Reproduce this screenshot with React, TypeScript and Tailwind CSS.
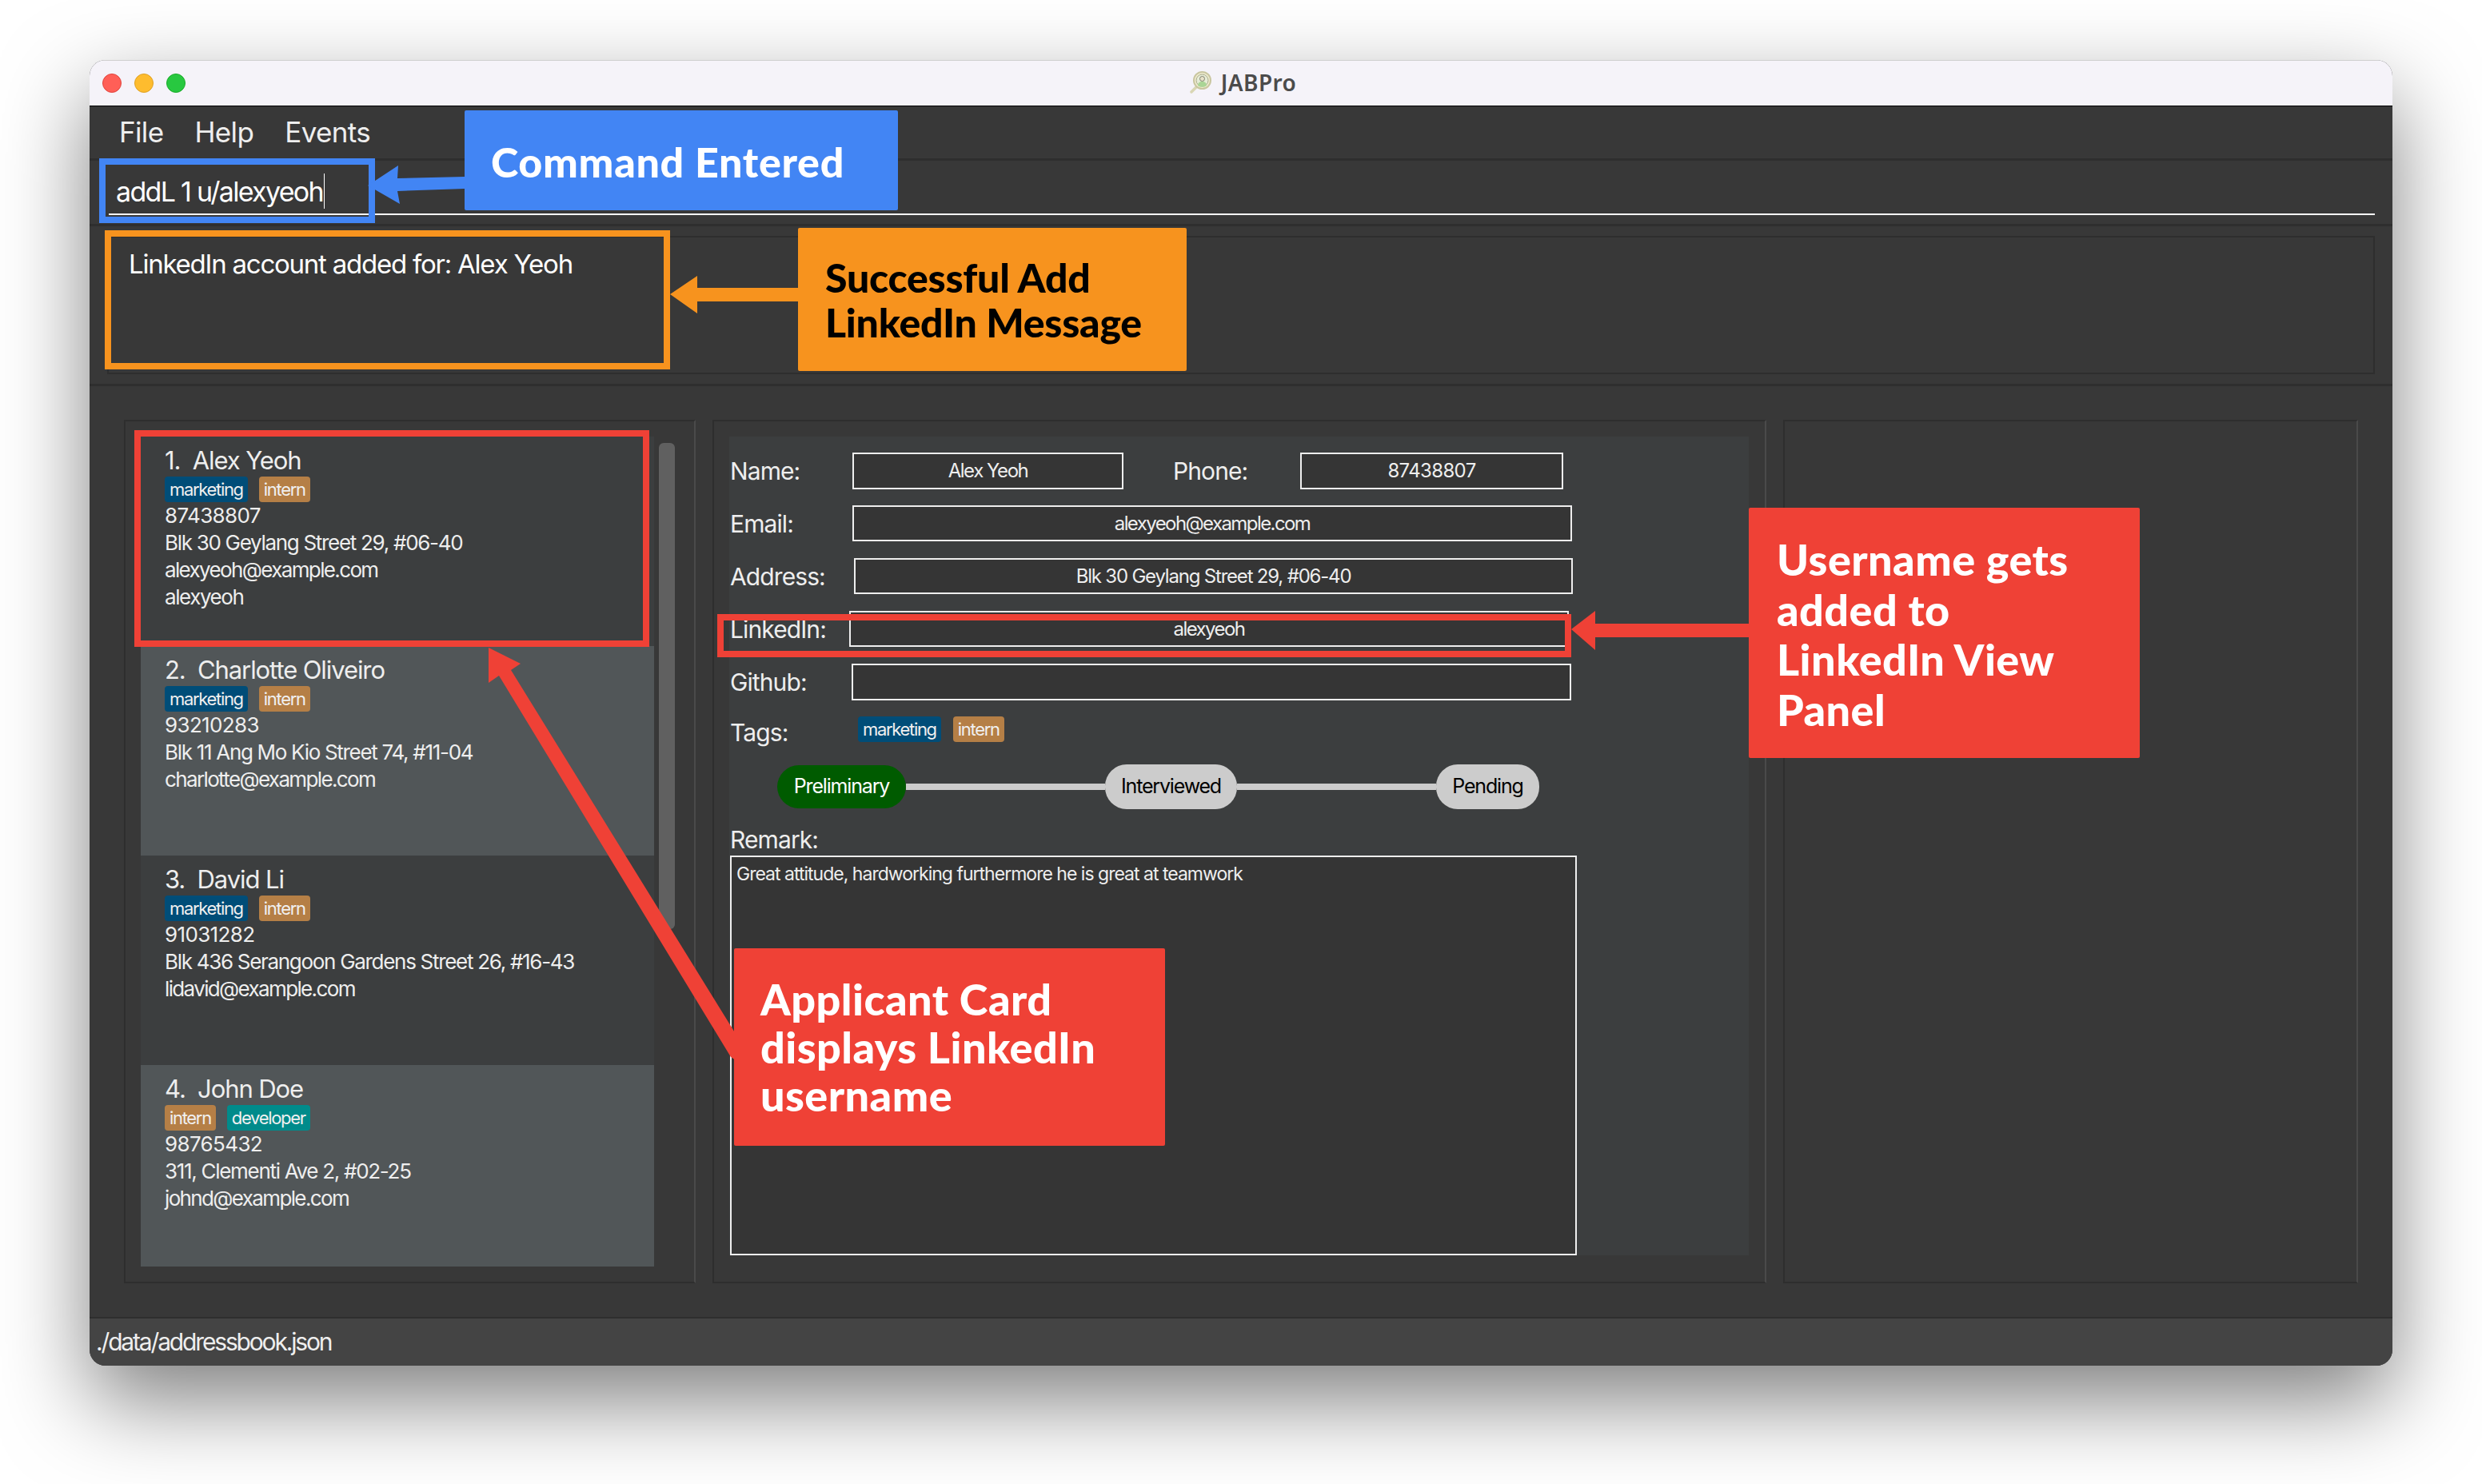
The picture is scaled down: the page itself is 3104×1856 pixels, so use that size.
import React from "react";

const Tag = ({ label, color }: { label: string; color: string }) => (
  <span className={`inline-flex h-[32px] items-center rounded-[4px] px-[6px] text-[22px] leading-none tracking-[-0.06em] text-[#f0f0f0] ${color}`}>{label}</span>
);
const MARKETING = "bg-[#004d78]";
const INTERN = "bg-[#b57f46]";
const DEV = "bg-[#008b8b]";

type CardData = { n: string; name: string; tags: [string, string][]; phone: string; address: string; email: string; username?: string; light?: boolean };
const cards: CardData[] = [
  { n: "1.", name: "Alex Yeoh", phone: "87438807", tags: [["marketing", MARKETING], ["intern", INTERN]], address: "Blk 30 Geylang Street 29, #06-40", email: "alexyeoh@example.com", username: "alexyeoh" },
  { n: "2.", name: "Charlotte Oliveiro", phone: "93210283", light: true, tags: [["marketing", MARKETING], ["intern", INTERN]], address: "Blk 11 Ang Mo Kio Street 74, #11-04", email: "charlotte@example.com" },
  { n: "3.", name: "David Li", phone: "91031282", tags: [["marketing", MARKETING], ["intern", INTERN]], address: "Blk 436 Serangoon Gardens Street 26, #16-43", email: "lidavid@example.com" },
  { n: "4.", name: "John Doe", phone: "98765432", light: true, tags: [["intern", INTERN], ["developer", DEV]], address: "311, Clementi Ave 2, #02-25", email: "johnd@example.com" },
];

const Card = ({ c }: { c: CardData }) => (
  <div className={`h-[262px] shrink-0 pl-[30px] pt-[11px] text-[26px] leading-[34px] text-[#eeeeee] ${c.light ? "bg-[#515658]" : "bg-[#3c3e3f]"}`}>
    <div className="whitespace-pre text-[31px] leading-[38px] tracking-[-0.035em]">{c.n}  {c.name}</div>
    <div className="mt-[1px] flex gap-[14px]">
      {c.tags.map(([l, col]) => <Tag key={l} label={l} color={col} />)}
    </div>
    <div>{c.phone}</div>
    <div className="tracking-[-0.05em]">{c.address}</div>
    <div className="tracking-[-0.063em]">{c.email}</div>
    {c.username && <div className="tracking-[-0.055em]">{c.username}</div>}
  </div>
);

const Label = ({ children, className }: { children: React.ReactNode; className: string }) => (
  <div className={`shrink-0 text-[30px] leading-[36px] tracking-[-0.03em] text-[#eeeeee] ${className}`}>{children}</div>
);
const Box = ({ children, className }: { children?: React.ReactNode; className: string }) => (
  <div className={`flex shrink-0 items-center justify-center border-2 border-[#eeeeee] bg-[#353535] text-[24px] text-[#eeeeee] ${className}`}>{children}</div>
);
const Node = ({ children, className }: { children: React.ReactNode; className: string }) => (
  <div className={`flex shrink-0 items-center justify-center rounded-[27px] text-[25px] tracking-[-0.047em] ${className}`}>{children}</div>
);

const Callout = ({ children, className }: { children: React.ReactNode; className: string }) => (
  <div className={`absolute rounded-[2px] font-black [font-family:Lato,sans-serif] ${className}`}>{children}</div>
);

export default function App() {
  return (
    <div className="relative h-[1856px] w-[3104px] overflow-hidden bg-white pl-[112px] pt-[75px] tracking-[-0.64px] [font-family:Inter,sans-serif]">
      <div className="flex h-[1633px] w-[2880px] flex-col overflow-hidden rounded-[20px] bg-[#383838] shadow-[0_44px_110px_rgba(0,0,0,0.5)]">
        {/* title bar */}
        <div className="grid h-[58px] shrink-0 grid-cols-[1fr_auto_1fr] items-center border-b border-t border-b-black border-t-[#cfcfcf] bg-[#f5f3f9] pl-[16px]">
          <div className="flex gap-[16px]">
            <span className="h-[24px] w-[24px] rounded-full border border-[#e0443e] bg-[#ff5f57]" />
            <span className="h-[24px] w-[24px] rounded-full border border-[#dea123] bg-[#febc2e]" />
            <span className="h-[24px] w-[24px] rounded-full border border-[#1aab29] bg-[#28c840]" />
          </div>
          <div className="mb-[3px] flex items-center gap-[12px] pr-[12px]">
            <svg viewBox="0 0 28 28" className="h-[28px] w-[28px]">
              <line x1="3" y1="26" x2="10" y2="19" stroke="#d9d6b4" strokeWidth="3.5" strokeLinecap="round" />
              <circle cx="16.5" cy="11.5" r="10.5" fill="#f0edd0" stroke="#c9c6a0" strokeWidth="2" />
              <circle cx="16.5" cy="11.5" r="7.5" fill="#e6ecd6" stroke="#a9a98c" strokeWidth="1" />
              <path d="M11 18c0-3.5 2.2-5 5.5-5s5.5 1.5 5.5 5c-1.500 1.300-3.400 1.800-5.500 1.800S12.500 19.300 11 18z" fill="#aad596" />
              <circle cx="16.500" cy="9.500" r="3" fill="#e8e2c8" stroke="#7f8070" strokeWidth="1" />
            </svg>
            <span className="text-[28px] font-semibold leading-none tracking-[0.015em] text-[#4b4b4b] [font-family:'Noto_Sans',sans-serif]">JABPro</span>
          </div>
          <div />
        </div>

        {/* menu bar */}
        <div className="flex h-[65px] shrink-0 items-center gap-[39px] pl-[37px] text-[35px] text-[#eeeeee]">
          <span>File</span>
          <span>Help</span>
          <span>Events</span>
        </div>

        {/* command box */}
        <div className="h-[85px] shrink-0 border-b-[3px] border-t-[3px] border-[#2e2e2e] pl-[24px] pr-[22px]">
          <div className="flex h-[68px] items-center border-b-2 border-white pl-[9px] pt-[10px] text-[34px] tracking-[-0.05em] text-white">
            <span>addL 1 u/alexyeoh</span>
            <span className="ml-[1px] h-[44px] w-[1px] bg-white" />
          </div>
        </div>

        {/* result display */}
        <div className="h-[200px] shrink-0 border-b-[3px] border-[#2e2e2e] pl-[22px] pr-[22px] pt-[12px]">
          <div className="h-[173px] border-2 border-[#2e2e2e] pl-[25px] pt-[14px] text-[33px] leading-[38px] tracking-[-0.0374em] text-white">
            LinkedIn account added for: Alex Yeoh
          </div>
        </div>

        {/* main */}
        <div className="flex min-h-0 flex-1 gap-[21px] px-[43px] py-[42px]">
          {/* list */}
          <div className="flex w-[715px] shrink-0 gap-[6px] border-2 border-[#2e2e2e] border-r-[#4a4a4a] pl-[19px] pt-[19px]">
            <div className="flex h-[1038px] w-[642px] shrink-0 flex-col overflow-hidden">
              {cards.map((c) => <Card key={c.n} c={c} />)}
            </div>
            <div className="mt-[8px] h-[608px] w-[20px] rounded-[6px] bg-[#606060]" />
          </div>

          {/* detail */}
          <div className="w-[1318px] shrink-0 border-2 border-[#2e2e2e] border-r-[#4a4a4a] pl-[19px] pr-[20px] pt-[19px]">
            <div className="h-[1024px] bg-[#3c3e3f] pl-[1px] pt-[20px]">
              <div className="flex items-center">
                <Label className="w-[153px]">Name:</Label>
                <Box className="h-[46px] w-[339px] tracking-[-0.06em]">Alex Yeoh</Box>
                <Label className="ml-[62px] w-[159px]">Phone:</Label>
                <Box className="h-[46px] w-[329px]">87438807</Box>
              </div>
              <div className="mt-[20px] flex items-center">
                <Label className="w-[153px]">Email:</Label>
                <Box className="h-[45px] w-[900px] tracking-[-0.066em]">alexyeoh@example.com</Box>
              </div>
              <div className="mt-[21px] flex items-center">
                <Label className="w-[155px]">Address:</Label>
                <Box className="h-[45px] w-[899px] tracking-[-0.05em]">Blk 30 Geylang Street 29, #06-40</Box>
              </div>
              <div className="mt-[21px] flex items-center">
                <Label className="w-[149px]">LinkedIn:</Label>
                <Box className="h-[45px] w-[900px] tracking-[-0.066em]">alexyeoh</Box>
              </div>
              <div className="mt-[21px] flex items-center">
                <Label className="w-[152px]">Github:</Label>
                <Box className="h-[46px] w-[900px]" />
              </div>
              <div className="mt-[20px] flex h-[38px] items-start">
                <Label className="mt-[2px] w-[160px]">Tags:</Label>
                <div className="flex gap-[15px]">
                  <Tag label="marketing" color={MARKETING} />
                  <Tag label="intern" color={INTERN} />
                </div>
              </div>
              <div className="ml-[59px] mt-[22px] flex h-[56px] items-center">
                <Node className="h-[54px] w-[161px] bg-[#005b00] text-white">Preliminary</Node>
                <div className="h-[8px] w-[249px] shrink-0 bg-[#cccccc]" />
                <Node className="h-[56px] w-[165px] bg-[#cccccc] text-black">Interviewed</Node>
                <div className="h-[8px] w-[249px] shrink-0 bg-[#cccccc]" />
                <Node className="h-[56px] w-[129px] bg-[#cccccc] text-black">Pending</Node>
              </div>
              <Label className="mt-[20px]">Remark:</Label>
              <div className="mt-[2px] h-[500px] w-[1059px] border-2 border-[#eeeeee] bg-[#353535] pl-[6px] pt-[6px] text-[23px] leading-[30px] tracking-[-0.043em] text-[#eeeeee]">
                Great attitude, hardworking furthermore he is great at teamwork
              </div>
            </div>
          </div>

          {/* right panel */}
          <div className="flex-1 border-2 border-[#2e2e2e] border-r-[#4a4a4a]" />
        </div>

        {/* status bar */}
        <div className="flex h-[61px] shrink-0 items-center border-t-2 border-[#2e2e2e] bg-[#444444] pl-[8px] text-[30px] tracking-[-0.072em] text-[#eeeeee]">
          ./data/addressbook.json
        </div>
      </div>

      {/* annotation frames */}
      <div className="absolute left-[124px] top-[198px] h-[81px] w-[345px] border-[8px] border-[#4285f4]" />
      <div className="absolute left-[131px] top-[288px] h-[174px] w-[707px] border-[8px] border-[#f7931e]" />
      <div className="absolute left-[168px] top-[538px] h-[271px] w-[644px] border-[8px] border-[#ef4136]" />
      <div className="absolute left-[897px] top-[768px] h-[54px] w-[1068px] border-[8px] border-[#ef4136]" />

      {/* annotation arrows */}
      <svg className="absolute left-0 top-0 h-[1856px] w-[3104px]" viewBox="0 0 3104 1856">
        <polygon points="460,232 498,207 497,223 581,221 581,236 497,239 500,255" fill="#4285f4" />
        <polygon points="838,368 872,345 872,360 998,360 998,377 872,377 872,392" fill="#f7931e" />
        <polygon points="1965,787 1995,764 1995,780 2188,780 2188,797 1995,797 1995,813" fill="#ef4136" />
        <polygon points="611,810 651,830 639,838 920,1293 920,1326 914,1322 624,845 611,854" fill="#ef4136" />
      </svg>

      {/* annotation labels */}
      <Callout className="left-[581px] top-[138px] h-[125px] w-[542px] bg-[#4285f4] pl-[33px] pt-[34px] text-[52px] leading-[60px] tracking-[0.013em] text-white">Command Entered</Callout>
      <Callout className="left-[998px] top-[285px] h-[179px] w-[486px] bg-[#f7931e] pl-[34px] pt-[34px] text-[50px] leading-[56px] tracking-[-0.005em] text-black">Successful Add<br />LinkedIn Message</Callout>
      <Callout className="left-[2187px] top-[635px] h-[313px] w-[489px] bg-[#ef4136] pl-[35px] pt-[34px] text-[54px] leading-[62.500px] tracking-[0.008em] text-white">Username gets<br />added to<br />LinkedIn View<br />Panel</Callout>
      <Callout className="left-[918px] top-[1186px] h-[247px] w-[539px] bg-[#ef4136] pl-[33px] pt-[34px] text-[54px] leading-[60px] tracking-[0.008em] text-white">Applicant Card<br />displays LinkedIn<br />username</Callout>
    </div>
  );
}
